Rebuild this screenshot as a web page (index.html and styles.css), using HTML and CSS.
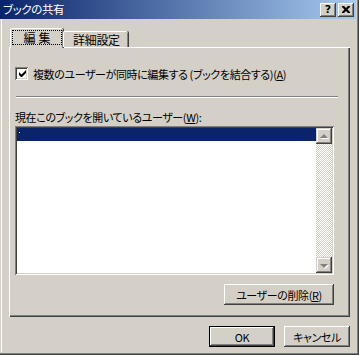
FILE: index.html
```html
<!DOCTYPE html>
<html lang="ja">
<head>
  <meta charset="UTF-8" />
  <title>ブックの共有</title>
  <link rel="stylesheet" href="styles.css">
</head>
<body>
  <div class="window">
    <div class="titlebar">
      <span class="title">ブックの共有</span>
      <div class="title-btns">
        <button class="tbtn help">?</button>
        <button class="tbtn close"><svg width="8" height="7" viewBox="0 0 8 7"><path d="M0 0h2l2 2 2-2h2v1l-2.5 2.5L8 6v1H6L4 5 2 7H0V6l2.5-2.5L0 1z" fill="#000"/></svg></button>
      </div>
    </div>
    <div class="client">
      <div class="tabs">
        <div class="tab active"><span class="focus">編集</span></div>
        <div class="tab">詳細設定</div>
      </div>
      <div class="panel">
        <div class="check-row">
          <span class="checkbox"><svg width="9" height="9" viewBox="0 0 9 9"><path d="M1 3v3l2 2h1l4-4V1L3.5 5.5z" fill="#000"/></svg></span>
          <span>複数のユーザーが同時に編集する (ブックを結合する)(<u>A</u>)</span>
        </div>
        <div class="sep"></div>
        <div class="list-label">現在このブックを開いているユーザー(<u>W</u>):</div>
        <div class="listbox">
          <div class="list-items">
            <div class="item sel"><span class="dot"></span></div>
          </div>
          <div class="vscroll">
            <div class="sbtn"><span class="arrow up"></span></div>
            <div class="track"></div>
            <div class="sbtn"><span class="arrow down"></span></div>
          </div>
        </div>
        <div class="panel-actions">
          <button class="btn del">ユーザーの削除(<u>R</u>)</button>
        </div>
      </div>
      <div class="dlg-actions">
        <button class="btn default">OK</button>
        <button class="btn">キャンセル</button>
      </div>
    </div>
  </div>
</body>
</html>
```

FILE: styles.css
```css
html,body{margin:0;padding:0;background:#d4d0c8}
body{font-family:"Noto Sans CJK JP","Noto Sans",sans-serif;font-size:11px;line-height:14px;letter-spacing:-0.4px;color:#000;font-feature-settings:"palt"}
u{text-decoration:underline;text-underline-offset:1px}

.window{width:359px;height:355px;box-sizing:border-box;padding:0 3px 3px 0;background:#d4d0c8;box-shadow:inset -1px -1px #404040,inset -2px -2px #808080;display:flex;flex-direction:column}

.titlebar{height:19px;display:flex;align-items:center;justify-content:space-between;background:linear-gradient(to right,#0a246a,#a6caf0);padding:0 2px 0 3px}
.title{color:#fff;font-size:11.5px;line-height:14px;margin-top:-1px}
.title-btns{display:flex;gap:2px}
.tbtn{width:16px;height:14px;padding:0;border:none;background:#d4d0c8;box-shadow:inset -1px -1px #404040,inset 1px 1px #fff,inset -2px -2px #808080;display:flex;align-items:center;justify-content:center;font-family:"DejaVu Sans",sans-serif;font-weight:bold;font-size:11px;line-height:12px;letter-spacing:0}
.tbtn.close svg{display:block}

.client{flex:1;margin-left:1px;border-left:1px solid #fff;padding:9px 0 0 7px;display:flex;flex-direction:column}

.tabs{display:flex;align-items:flex-end;padding-left:1px;position:relative;z-index:1}
.tab{height:16px;box-sizing:border-box;padding:1px 8px 0 9px;border-top:1px solid #fff;border-left:1px solid #fff;border-radius:2px 2px 0 0;box-shadow:inset -1px 0 #808080,1px 0 #404040;background:#d4d0c8;font-size:12px;line-height:14px;letter-spacing:-0.3px}
.tab.active{height:20px;width:53px;margin-bottom:-1px;padding:2px 0 0 2px}
.focus{display:block;width:48px;height:13px;box-sizing:border-box;outline:1px dotted #000;outline-offset:0;text-align:center;line-height:13px;letter-spacing:3px;text-indent:3px}

.panel{width:341px;height:270px;box-sizing:border-box;border-top:1px solid #fff;border-left:1px solid #fff;box-shadow:inset -1px -1px #404040,inset -2px -2px #808080;display:flex;flex-direction:column;padding:19px 2px 2px 5px}

.check-row{display:flex;align-items:center;gap:5px;height:13px}
.checkbox{width:13px;height:13px;box-sizing:border-box;background:#fff;box-shadow:inset 1px 1px #808080,inset -1px -1px #fff,inset 2px 2px #404040,inset -2px -2px #d4d0c8;display:flex;align-items:center;justify-content:center;flex:none}
.checkbox svg{display:block;margin:0 0 0 1px}

.sep{width:322px;height:1px;margin:16px 0 0 1px;border-bottom:1px solid #fff;background:#808080}

.list-label{margin-top:12px;height:14px}

.listbox{width:319px;height:149px;box-sizing:border-box;margin-top:2px;padding:2px;background:#fff;box-shadow:inset 1px 1px #808080,inset -1px -1px #fff,inset 2px 2px #404040,inset -2px -2px #d4d0c8;display:flex}
.list-items{flex:1}
.item{height:13px;overflow:hidden}
.item.sel{background:#0a246a}
.dot{display:block;width:1px;height:1px;background:#fff;margin:4px 0 0 2px}

.vscroll{width:16px;display:flex;flex-direction:column}
.sbtn{width:16px;height:16px;box-sizing:border-box;background:#d4d0c8;box-shadow:inset -1px -1px #404040,inset 1px 1px #d4d0c8,inset -2px -2px #808080,inset 2px 2px #fff;display:flex;align-items:center;justify-content:center}
.track{flex:1;background:repeating-conic-gradient(#d4d0c8 0 25%,#fff 0 50%) 0 0/2px 2px}
.arrow{width:0;height:0;border-left:4px solid transparent;border-right:4px solid transparent;filter:drop-shadow(1px 1px 0 #fff)}
.arrow.up{border-bottom:4px solid #808080;margin-top:-1px}
.arrow.down{border-top:4px solid #808080;margin-top:1px}

.panel-actions{display:flex;justify-content:flex-end;margin-top:9px;padding-right:14px}

.btn{height:21px;box-sizing:border-box;padding:0;border:none;background:#d4d0c8;box-shadow:inset -1px -1px #404040,inset 1px 1px #fff,inset -2px -2px #808080;font-family:inherit;font-size:11px;line-height:14px;letter-spacing:-0.4px;color:#000;font-feature-settings:"palt"}
.btn.del{width:110px}
.dlg-actions{display:flex;justify-content:flex-end;gap:9px;margin-top:9px;padding-right:6px}
.dlg-actions .btn{width:66px}
.btn.default{border:1px solid #000;box-shadow:inset -1px -1px #404040,inset 1px 1px #fff,inset -2px -2px #808080}
```
